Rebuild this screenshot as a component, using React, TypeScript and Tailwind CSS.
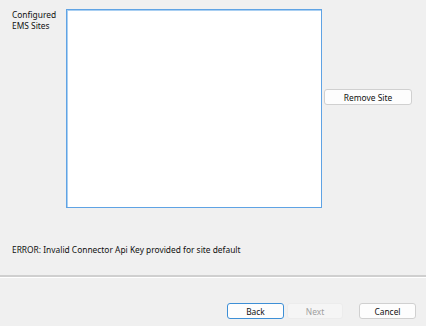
import React from "react";

const font = { fontFamily: '"Noto Sans", "Liberation Sans", sans-serif' };

const App: React.FC = () => {
  return (
    <div
      className="w-[426px] h-[326px] bg-[#f0f0f0] text-[8.4px] leading-[11px] text-[#111] flex flex-col overflow-hidden"
      style={font}
    >
      <div className="flex pt-[9px]">
        <div className="w-[66px] pl-[12px] pt-[0px]">
          <p>Configured</p>
          <p>EMS Sites</p>
        </div>
        <div className="w-[256px] h-[199px] bg-white border border-[#5fa3e4] shadow-[inset_1px_1px_0_#a9cff2]" />
        <div className="pl-[2px] pt-[80px]">
          <button className="w-[88px] h-[16px] bg-[#fdfdfd] border border-[#d0d0d0] rounded-[3px] flex items-center justify-center">
            Remove Site
          </button>
        </div>
      </div>
      <div className="pl-[12px] pt-[36px]">
        <p>ERROR: Invalid Connector Api Key provided for site default</p>
      </div>
      <div className="mt-[20px] h-[2px] bg-[#cfcfcf]" />
      <div className="h-[1px] bg-white" />
      <div className="flex justify-end pt-[25px] pr-[10px]">
        <button className="w-[57px] h-[16px] bg-[#fdfdfd] border border-[#3d8fd6] rounded-[3px] flex items-center justify-center">
          Back
        </button>
        <button className="ml-[3px] w-[56px] h-[16px] bg-[#f5f5f5] border border-[#ececec] rounded-[3px] flex items-center justify-center text-[#a0a0a0]">
          Next
        </button>
        <button className="ml-[16px] w-[57px] h-[16px] bg-[#fdfdfd] border border-[#d0d0d0] rounded-[3px] flex items-center justify-center">
          Cancel
        </button>
      </div>
    </div>
  );
};

export default App;
